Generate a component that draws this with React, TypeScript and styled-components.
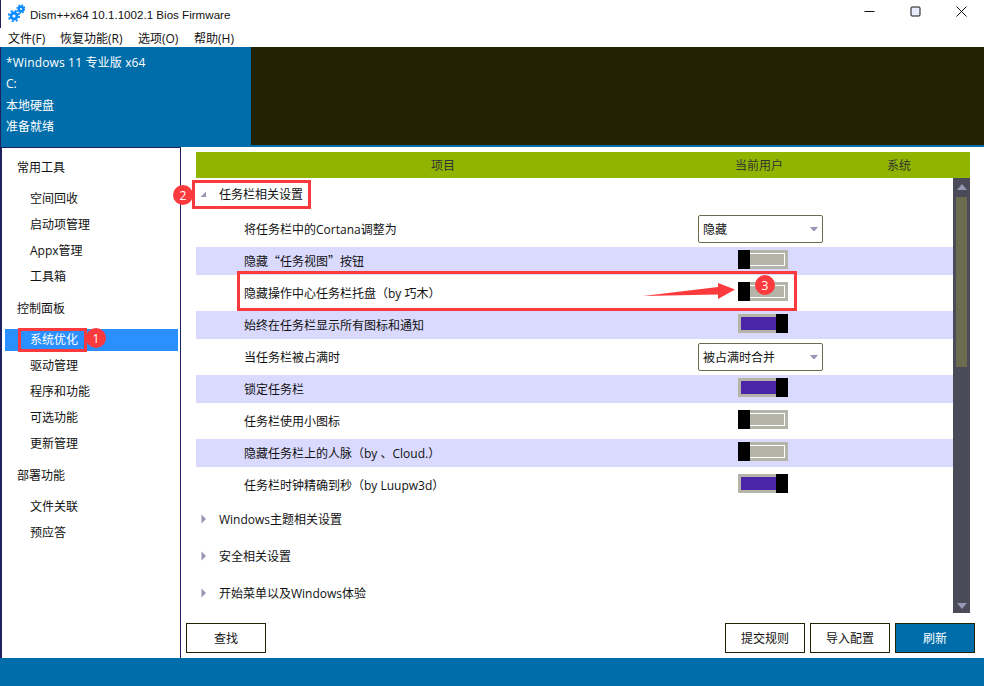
import React, { FunctionComponent, ReactNode } from 'react';
import styled, { createGlobalStyle } from 'styled-components';

const GlobalStyle = createGlobalStyle`
  html, body {
    margin: 0;
    padding: 0;
    background: #fff;
  }
  * {
    box-sizing: border-box;
  }
`;

const Window = styled.div`
  position: relative;
  width: 984px;
  height: 686px;
  overflow: hidden;
  display: flex;
  flex-direction: column;
  background: #fff;
  color: #111;
  font-family: "Open Sans", "Noto Sans CJK SC", sans-serif;
  font-size: 12px;
`;

const TitleBar = styled.div`
  height: 28px;
  display: flex;
  align-items: center;
  padding-left: 7px;
  border-left: 1px solid #1f2060;
  flex: none;
`;

const TitleText = styled.div`
  margin-left: 5px;
  font-family: "Liberation Sans", sans-serif;
  font-size: 11.6px;
  color: #111;
  flex: 1;
`;

const WinControls = styled.div`
  display: flex;
  align-items: center;
  margin-top: -6px;
`;

const WinButton = styled.div`
  width: 46px;
  height: 20px;
  display: flex;
  align-items: center;
  justify-content: center;
`;

const MenuBar = styled.div`
  height: 19px;
  display: flex;
  align-items: center;
  padding-left: 8px;
  flex: none;
`;

const MenuItem = styled.div<{ $w: number }>`
  width: ${p => p.$w}px;
`;

const Header = styled.div`
  height: 100px;
  display: flex;
  flex: none;
  background: #006dab;
  border-left: 1px solid #1f2060;
`;

const DriveInfo = styled.div`
  width: 250px;
  padding: 5px 0 0 5px;
  color: #fff;
  line-height: 21.3px;
`;

const WinName = styled.div`
  letter-spacing: 0.15px;
`;

const DarkPanel = styled.div`
  flex: 1;
  height: 98px;
  background: #232200;
`;

const Body = styled.div`
  flex: 1;
  display: flex;
  min-height: 0;
`;

const Sidebar = styled.div`
  width: 181px;
  flex: none;
  padding: 1px 2px 0 3px;
  border-top: 1px solid #1f2060;
  border-left: 2px solid #1f2060;
  border-right: 1px solid #1f2060;
`;

const SectionTitle = styled.div`
  height: 37px;
  line-height: 37px;
  padding-left: 12px;
`;

const NavItem = styled.div<{ $selected?: boolean }>`
  height: 26px;
  line-height: 22px;
  padding-left: 25px;
  border-top: 2px solid transparent;
  border-bottom: 2px solid transparent;
  background-clip: padding-box;
  background-color: ${p => (p.$selected ? '#2b90ff' : 'transparent')};
  color: ${p => (p.$selected ? '#fff' : '#111')};
`;

const Main = styled.div`
  flex: 1;
  display: flex;
  flex-direction: column;
  padding: 5px 9px 5px 5px;
  min-width: 0;
`;

const TableArea = styled.div`
  margin: 0 5px 0 10px;
`;

const TableHead = styled.div`
  height: 26px;
  display: grid;
  grid-template-columns: 494px 138px 1fr;
  align-items: center;
  text-align: center;
  background: #8fb500;
  color: #333;
`;

const TableBody = styled.div`
  height: 435px;
  display: flex;
`;

const List = styled.div`
  flex: 1;
  min-width: 0;
`;

const GroupRow = styled.div<{ $first?: boolean }>`
  height: ${p => (p.$first ? 35 : 37)}px;
  display: flex;
  align-items: center;
  gap: 13px;
  padding-left: 4px;
  padding-bottom: ${p => (p.$first ? 3 : 1)}px;
`;

const SettingRow = styled.div<{ $shaded?: boolean }>`
  height: 32px;
  display: grid;
  grid-template-columns: 494px 138px;
  align-items: center;
  border-top: 2px solid transparent;
  border-bottom: 2px solid transparent;
  background-clip: padding-box;
  background-color: ${p => (p.$shaded ? '#dadafe' : 'transparent')};
`;

const SettingLabel = styled.div`
  padding-left: 48px;
`;

const FullWidth = styled.span`
  font-family: "Noto Sans CJK SC", sans-serif;
`;

const Select = styled.div`
  width: 125px;
  height: 28px;
  margin-left: 8px;
  padding: 0 4px;
  display: flex;
  align-items: center;
  justify-content: space-between;
  border: 1px solid #6b6b50;
  border-radius: 2px;
  background: #fff;
`;

const Toggle = styled.div<{ $on?: boolean }>`
  position: relative;
  width: 50px;
  height: 19px;
  margin: -3px 0 0 48px;
  border: 3px solid #b5b4a8;
  background: ${p => (p.$on ? '#4a25a8' : '#b5b4a8')};
  outline: ${p => (p.$on ? 'none' : '1px solid #fff')};
  outline-offset: -4px;

  &::after {
    content: '';
    position: absolute;
    top: -3px;
    bottom: -3px;
    width: 12px;
    background: #000;
    ${p => (p.$on ? 'right: -3px;' : 'left: -3px;')}
  }
`;

const Scrollbar = styled.div`
  width: 17px;
  flex: none;
  background: #4a4a58;
  display: flex;
  flex-direction: column;
  align-items: center;
  padding-top: 6px;
`;

const ScrollThumb = styled.div`
  width: 11px;
  height: 170px;
  margin-top: 7px;
  background: #6b6b50;
`;

const ScrollDown = styled.div`
  margin-top: auto;
  padding-bottom: 4px;
  line-height: 0;
`;

const ButtonRow = styled.div`
  display: flex;
  gap: 5px;
  margin-top: 10px;
`;

const Button = styled.div<{ $primary?: boolean }>`
  width: 80px;
  height: 30px;
  display: flex;
  align-items: center;
  justify-content: center;
  border: 1px solid #232200;
  background: ${p => (p.$primary ? '#006dab' : '#fff')};
  color: ${p => (p.$primary ? '#fff' : '#111')};
`;

const Spacer = styled.div`
  flex: 1;
`;

const StatusBar = styled.div`
  height: 28px;
  flex: none;
  background: #006dab;
`;

const Marker = styled.div<{ $x: number; $y: number; $w: number; $h: number }>`
  position: absolute;
  left: ${p => p.$x}px;
  top: ${p => p.$y}px;
  width: ${p => p.$w}px;
  height: ${p => p.$h}px;
  border: 3px solid #fb3a3d;
`;

const Badge = styled.div<{ $x: number; $y: number }>`
  position: absolute;
  left: ${p => p.$x - 10}px;
  top: ${p => p.$y - 10}px;
  width: 20px;
  height: 20px;
  border-radius: 50%;
  background: #fb3a3d;
  color: #fff;
  font-size: 12px;
  display: flex;
  align-items: center;
  justify-content: center;
`;

const ArrowSvg = styled.svg`
  position: absolute;
  left: 640px;
  top: 280px;
`;

const TriangleUp = () => (
  <svg width="10" height="6" viewBox="0 0 10 6"><path d="M5 0L10 6H0z" fill="#9896b4" /></svg>
);

const TriangleDown = ({ size = 10 }: { size?: number }) => (
  <svg width={size} height={size * 0.6} viewBox="0 0 10 6"><path d="M0 0H10L5 6z" fill="#9896b4" /></svg>
);

const TriangleRight = () => (
  <svg width="6" height="10" viewBox="0 0 6 10"><path d="M1.500 0.500L6 5L1.500 9.500z" fill="#9896b4" /></svg>
);

const TriangleOpen = () => (
  <svg width="6" height="6" viewBox="0 0 6 6"><path d="M6 0.500V6H0.500z" fill="#9896b4" /></svg>
);

const GearsIcon = () => (
  <svg width="17" height="24" viewBox="0 0 17 24">
    <g fill="none" stroke="#0a8cff">
      <circle cx="6" cy="14" r="3" strokeWidth="2.8" />
      <circle cx="6" cy="14" r="5.2" strokeWidth="1.8" strokeDasharray="2.1 2" />
      <circle cx="13" cy="7" r="2.200" strokeWidth="2.400" />
      <circle cx="13" cy="7" r="3.900" strokeWidth="1.600" strokeDasharray="1.600 1.460" />
    </g>
  </svg>
);

interface Setting {
  label: ReactNode;
  select?: string;
  on?: boolean;
}

const settings: Setting[] = [
  { label: '将任务栏中的Cortana调整为', select: '隐藏' },
  { label: <>隐藏<FullWidth>“</FullWidth>任务视图<FullWidth>”</FullWidth>按钮</>, on: false },
  { label: '隐藏操作中心任务栏托盘（by 巧木）', on: false },
  { label: '始终在任务栏显示所有图标和通知', on: true },
  { label: '当任务栏被占满时', select: '被占满时合并' },
  { label: '锁定任务栏', on: true },
  { label: '任务栏使用小图标', on: false },
  { label: '隐藏任务栏上的人脉（by 、Cloud.）', on: false },
  { label: '任务栏时钟精确到秒（by Luupw3d）', on: true },
];

const nav = [
  { title: '常用工具', items: ['空间回收', '启动项管理', 'Appx管理', '工具箱'] },
  { title: '控制面板', items: ['系统优化', '驱动管理', '程序和功能', '可选功能', '更新管理'] },
  { title: '部署功能', items: ['文件关联', '预应答'] },
];

const App: FunctionComponent = () => (
  <Window>
    <GlobalStyle />
    <TitleBar>
      <GearsIcon />
      <TitleText>Dism++x64 10.1.1002.1 Bios Firmware</TitleText>
      <WinControls>
        <WinButton>
          <svg width="11" height="11" viewBox="0 0 11 11"><path d="M0.500 5.500H10.500" stroke="#111" /></svg>
        </WinButton>
        <WinButton>
          <svg width="11" height="11" viewBox="0 0 11 11"><rect x="1" y="1" width="9" height="9" rx="1" fill="#e8ecff" stroke="#111" /></svg>
        </WinButton>
        <WinButton>
          <svg width="11" height="11" viewBox="0 0 11 11"><path d="M0.500 0.500L10.500 10.500M10.500 0.500L0.500 10.500" stroke="#111" /></svg>
        </WinButton>
      </WinControls>
    </TitleBar>
    <MenuBar>
      <MenuItem $w={52}>文件(F)</MenuItem>
      <MenuItem $w={78}>恢复功能(R)</MenuItem>
      <MenuItem $w={56}>选项(O)</MenuItem>
      <MenuItem $w={60}>帮助(H)</MenuItem>
    </MenuBar>
    <Header>
      <DriveInfo>
        <WinName>*Windows 11 专业版 x64</WinName>
        <div>C:</div>
        <div>本地硬盘</div>
        <div>准备就绪</div>
      </DriveInfo>
      <DarkPanel />
    </Header>
    <Body>
      <Sidebar>
        {nav.map(section => (
          <div key={section.title}>
            <SectionTitle>{section.title}</SectionTitle>
            {section.items.map(item => (
              <NavItem key={item} $selected={item === '系统优化'}>{item}</NavItem>
            ))}
          </div>
        ))}
      </Sidebar>
      <Main>
        <TableArea>
          <TableHead>
            <div>项目</div>
            <div>当前用户</div>
            <div>系统</div>
          </TableHead>
          <TableBody>
            <List>
              <GroupRow $first>
                <TriangleOpen />
                <span>任务栏相关设置</span>
              </GroupRow>
              {settings.map((s, i) => (
                <SettingRow key={i} $shaded={i % 2 === 1}>
                  <SettingLabel>{s.label}</SettingLabel>
                  {s.select ? (
                    <Select>
                      <span>{s.select}</span>
                      <TriangleDown size={8} />
                    </Select>
                  ) : (
                    <Toggle $on={s.on} />
                  )}
                </SettingRow>
              ))}
              <GroupRow>
                <TriangleRight />
                <span>Windows主题相关设置</span>
              </GroupRow>
              <GroupRow>
                <TriangleRight />
                <span>安全相关设置</span>
              </GroupRow>
              <GroupRow>
                <TriangleRight />
                <span>开始菜单以及Windows体验</span>
              </GroupRow>
            </List>
            <Scrollbar>
              <TriangleUp />
              <ScrollThumb />
              <ScrollDown><TriangleDown /></ScrollDown>
            </Scrollbar>
          </TableBody>
        </TableArea>
        <ButtonRow>
          <Button>查找</Button>
          <Spacer />
          <Button>提交规则</Button>
          <Button>导入配置</Button>
          <Button $primary>刷新</Button>
        </ButtonRow>
      </Main>
    </Body>
    <StatusBar />

    <Marker $x={18} $y={328} $w={69} $h={24} />
    <Badge $x={96} $y={338}>1</Badge>
    <Marker $x={192} $y={180} $w={119} $h={29} />
    <Badge $x={183} $y={195}>2</Badge>
    <Marker $x={237} $y={271} $w={560} $h={40} />
    <ArrowSvg width="100" height="20" viewBox="0 0 100 20">
      <path d="M3 16L78 7V3L95 9.500L78 19V14.500z" fill="#fb3a3d" />
    </ArrowSvg>
    <Badge $x={765} $y={285}>3</Badge>
  </Window>
);

export default App;
